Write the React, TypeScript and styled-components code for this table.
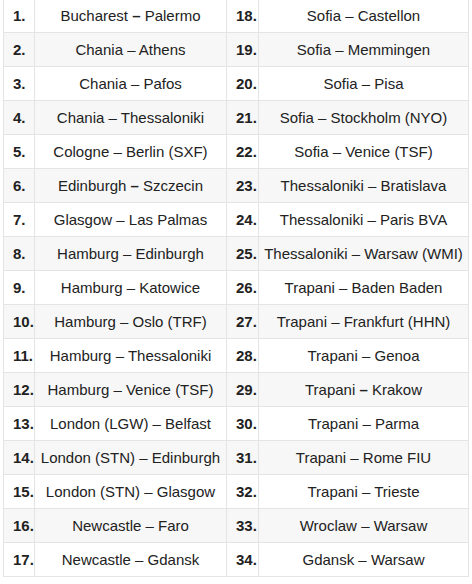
import React from 'react';
import styled, { createGlobalStyle } from 'styled-components';

const GlobalStyle = createGlobalStyle`
  body {
    margin: 0;
    background: #ffffff;
    font-family: "Liberation Sans", Arial, sans-serif;
  }
`;

const Wrapper = styled.div`
  padding: 0 0 0 3px;
  margin-top: -2px;
`;

const RoutesTable = styled.table`
  border-collapse: collapse;
  table-layout: fixed;
  width: 465px;
  color: #222222;
  font-size: 15px;
`;

const Row = styled.tr<{ $striped: boolean }>`
  height: 34px;
  background: ${(p) => (p.$striped ? '#f7f7f7' : '#ffffff')};
`;

const NumCell = styled.td`
  border: 1px solid #e4e4e4;
  padding: 0 0 0 9px;
  font-weight: bold;
  text-align: left;
  white-space: nowrap;
`;

const RouteCell = styled.td`
  border: 1px solid #e4e4e4;
  padding: 0;
  text-align: center;
  white-space: nowrap;
`;

const Dash = styled.span<{ $bold?: boolean }>`
  font-weight: ${(p) => (p.$bold ? 'bold' : 'normal')};
`;

type Route = { from: string; to: string; bold?: boolean };

const left: Route[] = [
  { from: 'Bucharest', to: 'Palermo', bold: true },
  { from: 'Chania', to: 'Athens' },
  { from: 'Chania', to: 'Pafos' },
  { from: 'Chania', to: 'Thessaloniki' },
  { from: 'Cologne', to: 'Berlin (SXF)' },
  { from: 'Edinburgh', to: 'Szczecin', bold: true },
  { from: 'Glasgow', to: 'Las Palmas' },
  { from: 'Hamburg', to: 'Edinburgh' },
  { from: 'Hamburg', to: 'Katowice' },
  { from: 'Hamburg', to: 'Oslo (TRF)' },
  { from: 'Hamburg', to: 'Thessaloniki' },
  { from: 'Hamburg', to: 'Venice (TSF)' },
  { from: 'London (LGW)', to: 'Belfast' },
  { from: 'London (STN)', to: 'Edinburgh' },
  { from: 'London (STN)', to: 'Glasgow' },
  { from: 'Newcastle', to: 'Faro' },
  { from: 'Newcastle', to: 'Gdansk' },
];

const right: Route[] = [
  { from: 'Sofia', to: 'Castellon' },
  { from: 'Sofia', to: 'Memmingen' },
  { from: 'Sofia', to: 'Pisa' },
  { from: 'Sofia', to: 'Stockholm (NYO)' },
  { from: 'Sofia', to: 'Venice (TSF)' },
  { from: 'Thessaloniki', to: 'Bratislava' },
  { from: 'Thessaloniki', to: 'Paris BVA' },
  { from: 'Thessaloniki', to: 'Warsaw (WMI)' },
  { from: 'Trapani', to: 'Baden Baden' },
  { from: 'Trapani', to: 'Frankfurt (HHN)' },
  { from: 'Trapani', to: 'Genoa' },
  { from: 'Trapani', to: 'Krakow', bold: true },
  { from: 'Trapani', to: 'Parma' },
  { from: 'Trapani', to: 'Rome FIU' },
  { from: 'Trapani', to: 'Trieste' },
  { from: 'Wroclaw', to: 'Warsaw' },
  { from: 'Gdansk', to: 'Warsaw' },
];

const RouteText = ({ r }: { r: Route }) => (
  <>
    {r.from} <Dash $bold={r.bold}>–</Dash> {r.to}
  </>
);

export default function App() {
  return (
    <>
      <GlobalStyle />
      <Wrapper>
        <RoutesTable>
          <colgroup>
            <col style={{ width: 31 }} />
            <col style={{ width: 192 }} />
            <col style={{ width: 32 }} />
            <col style={{ width: 210 }} />
          </colgroup>
          <tbody>
            {left.map((r, i) => (
              <Row key={i} $striped={i % 2 === 1}>
                <NumCell>{i + 1}.</NumCell>
                <RouteCell>
                  <RouteText r={r} />
                </RouteCell>
                <NumCell>{i + 18}.</NumCell>
                <RouteCell>
                  <RouteText r={right[i]} />
                </RouteCell>
              </Row>
            ))}
          </tbody>
        </RoutesTable>
      </Wrapper>
    </>
  );
}
